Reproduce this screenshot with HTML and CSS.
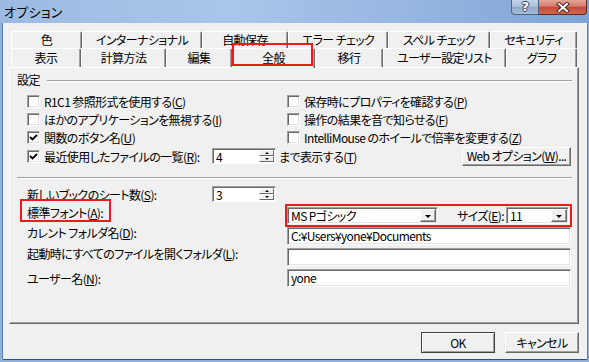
FILE: index.html
```html
<!doctype html>
<html>
<head>
<meta charset="utf-8">
<title>オプション</title>
<link rel="stylesheet" href="styles.css">
</head>
<body>
<div class="window">
	<div class="titlebar">
		<span class="title">オプション</span>
		<div class="caption">
			<span class="cap-help">?</span>
			<span class="cap-close">
				<svg width="14" height="11" viewBox="0 0 14 11">
					<path d="M3 2 L11 9 M11 2 L3 9" stroke="#4a2222" stroke-width="4" stroke-linecap="square"/>
					<path d="M3 2 L11 9 M11 2 L3 9" stroke="#fff" stroke-width="2" stroke-linecap="square"/>
				</svg>
			</span>
		</div>
	</div>
	<div class="client">
		<div class="tabs">
			<div class="tab-row row1">
				<div class="tab">色</div>
				<div class="tab">インターナショナル</div>
				<div class="tab">自動保存</div>
				<div class="tab">エラー チェック</div>
				<div class="tab">スペル チェック</div>
				<div class="tab">セキュリティ</div>
			</div>
			<div class="tab-row row2">
				<div class="tab">表示</div>
				<div class="tab">計算方法</div>
				<div class="tab">編集</div>
				<div class="tab active">全般</div>
				<div class="tab">移行</div>
				<div class="tab">ユーザー設定リスト</div>
				<div class="tab">グラフ</div>
			</div>
		</div>

		<div class="panel">
			<div class="group-head"><span>設定</span><span class="rule"></span></div>

			<div class="checks">
				<label class="chk"><span class="cb"></span>R1C1 参照形式を使用する(<u>C</u>)</label>
				<label class="chk"><span class="cb"></span>保存時にプロパティを確認する(<u>P</u>)</label>
				<label class="chk"><span class="cb"></span>ほかのアプリケーションを無視する(<u>I</u>)</label>
				<label class="chk"><span class="cb"></span>操作の結果を音で知らせる(<u>F</u>)</label>
				<label class="chk"><span class="cb on"><svg width="9" height="9" viewBox="0 0 9 9"><polyline points="1,4 3.5,6.5 8,2" fill="none" stroke="#000" stroke-width="1.8"/></svg></span>関数のボタン名(<u>U</u>)</label>
				<label class="chk"><span class="cb"></span>IntelliMouse のホイールで倍率を変更する(<u>Z</u>)</label>
				<div class="recent">
					<label class="chk recent-lbl"><span class="cb on"><svg width="9" height="9" viewBox="0 0 9 9"><polyline points="1,4 3.5,6.5 8,2" fill="none" stroke="#000" stroke-width="1.8"/></svg></span>最近使用したファイルの一覧(<u>R</u>):</label>
					<div class="spin"><span class="spin-val">4</span><span class="spin-btns"><span class="up"></span><span class="down"></span></span></div>
					<span class="after">まで表示する(<u>T</u>)</span>
					<button class="btn web">Web オプション(<u>W</u>)...</button>
				</div>
			</div>

			<div class="sep"></div>

			<div class="fields">
				<div class="frow row-a">
					<span class="lbl short">新しいブックのシート数(<u>S</u>):</span>
					<div class="spin"><span class="spin-val">3</span><span class="spin-btns"><span class="up"></span><span class="down"></span></span></div>
				</div>
				<div class="frow row-b">
					<span class="lbl lift-sm">標準フォント(<u>A</u>):</span>
					<div class="field">
						<div class="combo font-combo"><span class="combo-val">MS Pゴシック</span><span class="drop"></span></div>
						<span class="size-lbl">サイズ(<u>E</u>):</span>
						<div class="combo size-combo"><span class="combo-val">11</span><span class="drop"></span></div>
					</div>
				</div>
				<div class="frow row-c">
					<span class="lbl lift">カレント フォルダ名(<u>D</u>):</span>
					<div class="field"><div class="edit">C:¥Users¥yone¥Documents</div></div>
				</div>
				<div class="frow row-d">
					<span class="lbl lift">起動時にすべてのファイルを開くフォルダ(<u>L</u>):</span>
					<div class="field"><div class="edit"></div></div>
				</div>
				<div class="frow row-e">
					<span class="lbl">ユーザー名(<u>N</u>):</span>
					<div class="field"><div class="edit">yone</div></div>
				</div>
			</div>
		</div>

		<div class="actions">
			<button class="btn default">OK</button>
			<button class="btn">キャンセル</button>
		</div>
	</div>

	<div class="mark mark-tab"></div>
	<div class="mark mark-label"></div>
	<div class="mark mark-font"></div>
</div>
</body>
</html>
```

FILE: styles.css
```css
*{
	margin:0;
	padding:0;
	box-sizing:border-box;
}
body{
	width:589px;
	height:362px;
	overflow:hidden;
	background:#f0f0f0;
	font-family:"Noto Sans CJK JP","Noto Sans",sans-serif;
	font-size:12px;
	font-feature-settings:"palt";
	letter-spacing:-0.6px;
	color:#000;
}
u{
	text-decoration:underline;
	text-underline-offset:1px;
}
button{
	font:inherit;
	color:inherit;
	letter-spacing:inherit;
}
.window{
	position:relative;
	width:589px;
	height:362px;
	display:flex;
	flex-direction:column;
	background:#8fb0dc;
}

/* title bar */
.titlebar{
	height:23px;
	display:flex;
	align-items:flex-start;
	padding-left:4px;
	background:linear-gradient(90deg,#9dbbe2 0%,#a9c5e9 40%,#95b6e0 70%,#7ea3d6 100%);
}
.title{
	font-size:13px;
	line-height:23px;
	letter-spacing:.3px;
}
.caption{
	display:flex;
	margin-left:auto;
	margin-right:2px;
}
.cap-help{
	width:28px;
	height:15px;
	border:1px solid #4e6281;
	border-top:0;
	border-radius:0 0 0 4px;
	background:linear-gradient(#c3d3ea,#a9bedb 50%,#90a8c9 51%,#a7bcd8);
	color:#fff;
	font:bold 13px/13px "DejaVu Sans",sans-serif;
	text-align:center;
	text-shadow:1px 0 #33425a,-1px 0 #33425a,0 1px #33425a,0 -1px #33425a;
}
.cap-close{
	width:48px;
	height:15px;
	display:flex;
	align-items:center;
	justify-content:center;
	border:1px solid #5a2a26;
	border-top:0;
	border-left:0;
	border-radius:0 0 4px 0;
	background:linear-gradient(#e4a597,#d27d6c 45%,#c24a39 50%,#d3684f);
}

/* client */
.client{
	flex:1;
	background:#f0f0f0;
	margin:0 2px 3px 3px;
	padding:8px 8px 0 6px;
	box-shadow:-1px 0 #5b7eb0,1px 0 #5b7eb0,0 1px #34507a;
}

/* tabs */
.tabs{
	margin:0 2px;
}
.tab-row{
	display:grid;
}
.row1{
	height:17px;
	grid-template-columns:71px 120px 86px 100px 102px 87px;
}
.row2{
	height:19px;
	grid-template-columns:70px 85px 66px 83px 68px 123px 71px;
}
.tab{
	background:#f0f0f0;
	border-top:1px solid #fff;
	border-left:1px solid #fff;
	border-right:1px solid #696969;
	box-shadow:inset -1px 0 #a0a0a0;
	border-radius:2px 2px 0 0;
	text-align:center;
	line-height:16px;
	white-space:nowrap;
}
.row2 .tab{
	line-height:18px;
}
.tab.active{
	position:relative;
	z-index:1;
	margin-bottom:-1px;
}

/* panel */
.panel{
	height:257px;
	border:1px solid;
	border-color:#fff #696969 #696969 #fff;
	box-shadow:inset -1px -1px #a0a0a0;
	padding:5px 6px 0 7px;
}
.group-head{
	display:flex;
	align-items:center;
	height:14px;
	line-height:14px;
}
.rule{
	flex:1;
	margin:2px 0 0 7px;
	border-top:1px solid #a0a0a0;
	border-bottom:1px solid #fff;
}
.checks{
	display:grid;
	grid-template-columns:260px 1fr;
	grid-template-rows:18px 18px 18px 20px;
	margin-top:5px;
	padding-left:10px;
}
.chk{
	display:flex;
	align-items:center;
	white-space:nowrap;
}
.cb{
	width:13px;
	height:13px;
	flex:none;
	margin-right:4px;
	display:flex;
	align-items:center;
	justify-content:center;
	background:#fff;
	border:1px solid;
	border-color:#a0a0a0 #fff #fff #a0a0a0;
	box-shadow:inset 1px 1px #696969,inset -1px -1px #e3e3e3;
}
.recent{
	grid-column:1/-1;
	display:flex;
	align-items:center;
}
.recent-lbl{
	width:185px;
}
.after{
	margin-left:3px;
}

/* spin */
.spin{
	width:64px;
	height:16px;
	display:flex;
	background:#fff;
	border:1px solid;
	border-color:#a0a0a0 #fff #fff #a0a0a0;
	box-shadow:inset 1px 1px #696969;
}
.spin-val{
	flex:1;
	padding:1px 0 0 3px;
	line-height:13px;
}
.spin-btns{
	width:16px;
	display:flex;
	flex-direction:column;
	padding:1px 1px 1px 0;
}
.spin-btns span{
	flex:1;
	display:flex;
	align-items:center;
	justify-content:center;
	background:#f0f0f0;
	border:1px solid;
	border-color:#fff #696969 #696969 #fff;
}
.spin-btns .up::after{
	content:"";
	border:2px solid transparent;
	border-top:0;
	border-bottom:2px solid #000;
}
.spin-btns .down::after{
	content:"";
	border:2px solid transparent;
	border-bottom:0;
	border-top:2px solid #000;
}

/* buttons */
.btn{
	height:21px;
	background:#f0f0f0;
	border:1px solid;
	border-color:#fff #696969 #696969 #fff;
	box-shadow:inset -1px -1px #a0a0a0;
	text-align:center;
	line-height:18px;
	white-space:nowrap;
}
.web{
	width:109px;
	height:19px;
	line-height:16px;
	margin-left:auto;
	margin-right:1px;
}

.sep{
	margin-top:11px;
	border-top:1px solid #a0a0a0;
	border-bottom:1px solid #fff;
}

/* lower fields */
.fields{
	margin-top:5px;
	padding-left:10px;
}
.frow{
	display:flex;
	align-items:center;
	white-space:nowrap;
}
.lbl{
	width:260px;
	flex:none;
}
.lbl.short{
	width:185px;
}
.lbl.lift{
	margin-bottom:8px;
}
.lbl.lift-sm{
	margin-bottom:6px;
}
.row-a{
	height:20px;
}
.row-b{
	height:23px;
}
.row-c,.row-d,.row-e{
	height:18px;
	margin-bottom:3px;
}
.field{
	width:284px;
	height:100%;
	display:flex;
	align-items:center;
}
.edit{
	width:100%;
	height:18px;
	padding:0 0 0 3px;
	line-height:16px;
	background:#fff;
	border:1px solid;
	border-color:#a0a0a0 #fff #fff #a0a0a0;
	box-shadow:inset 1px 1px #696969,inset -1px -1px #e3e3e3;
}
.combo{
	height:17px;
	display:flex;
	background:#fff;
	border:1px solid;
	border-color:#a0a0a0 #fff #fff #a0a0a0;
	box-shadow:inset 1px 1px #696969,inset -1px -1px #e3e3e3;
	padding:1px 1px 1px 0;
}
.combo-val{
	flex:1;
	padding-left:3px;
	line-height:14px;
}
.drop{
	width:16px;
	display:flex;
	align-items:flex-end;
	justify-content:center;
	padding-bottom:3px;
	background:#f0f0f0;
	border:1px solid;
	border-color:#fff #696969 #696969 #fff;
	box-shadow:inset -1px -1px #a0a0a0;
}
.drop::after{
	content:"";
	border:3px solid transparent;
	border-bottom:0;
	border-top:3px solid #000;
}
.font-combo{
	width:151px;
}
.size-lbl{
	margin-left:19px;
}
.size-combo{
	width:63px;
	margin-left:auto;
	margin-right:2px;
}

/* OK / cancel */
.actions{
	display:flex;
	justify-content:flex-end;
	gap:10px;
	margin-top:8px;
}
.actions .btn{
	width:74px;
}
.btn.default{
	border-color:#404040;
	box-shadow:inset 1px 1px #fff,inset -1px -1px #a0a0a0;
}

/* red highlight marks */
.mark{
	position:absolute;
	z-index:5;
	border:2px solid #ef1b1b;
}
.mark-tab{
	left:232px;
	top:43px;
	width:81px;
	height:23px;
}
.mark-label{
	left:20px;
	top:199px;
	width:91px;
	height:23px;
}
.mark-font{
	left:285px;
	top:204px;
	width:287px;
	height:23px;
}
```
